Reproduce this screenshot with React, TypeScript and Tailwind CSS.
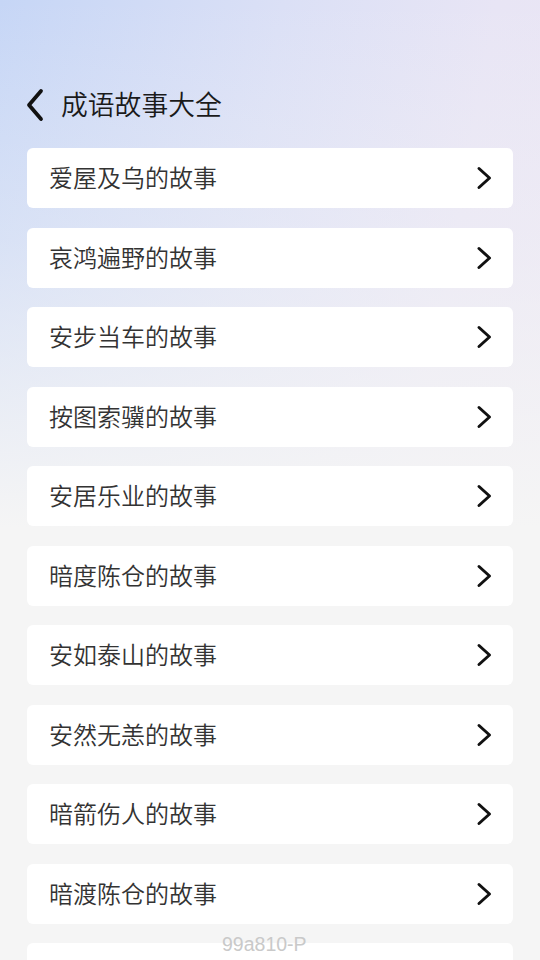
import React from "react";

const items = [
  "爱屋及乌的故事",
  "哀鸿遍野的故事",
  "安步当车的故事",
  "按图索骥的故事",
  "安居乐业的故事",
  "暗度陈仓的故事",
  "安如泰山的故事",
  "安然无恙的故事",
  "暗箭伤人的故事",
  "暗渡陈仓的故事",
  "爱莫能助的故事",
];

function Chevron() {
  return (
    <svg width="18" height="26" viewBox="0 0 18 26" fill="none">
      <path d="M4 3.5 L14.5 13 L4 22.5" stroke="#111" strokeWidth="3" strokeLinecap="round" strokeLinejoin="round" />
    </svg>
  );
}

export default function App() {
  return (
    <div
      className="relative w-[540px] h-[960px] overflow-hidden bg-[#f5f5f5] bg-[linear-gradient(180deg,rgba(245,245,245,0)_0%,rgba(245,245,245,0.35)_25%,#f5f5f5_55%),linear-gradient(100deg,#c6d6f6_0%,#dbe0f6_40%,#e8e5f5_70%,#ebe6f4_100%)]"
      style={{ fontFamily: '"Noto Sans CJK SC", "Noto Sans", sans-serif' }}
    >
      <div className="pt-[88px] px-[27px]">
        <div className="flex items-center h-[34px] -ml-[5px]">
          <svg width="24" height="34" viewBox="0 0 24 34" fill="none">
            <path d="M19 3 L7 17 L19 31" stroke="#111" strokeWidth="3.8" strokeLinecap="round" strokeLinejoin="round" />
          </svg>
          <span className="ml-[15px] -mt-[1px] text-[26.8px] leading-none font-[350] text-[#1a1a1a]">成语故事大全</span>
        </div>
        <div className="mt-[26px] flex flex-col gap-[19.5px]">
          {items.map((t) => (
            <div
              key={t}
              className="h-[60px] bg-white rounded-[6px] flex items-center justify-between pl-[22px] pr-[20px]"
            >
              <span className="-mt-[2px] text-[24px] text-[#333] font-[350] leading-none">{t}</span>
              <Chevron />
            </div>
          ))}
        </div>
      </div>
      <div
        className="absolute left-[222px] top-[935px] text-[19.5px] leading-none text-[#c9c9c9]"
        style={{ fontFamily: '"Liberation Sans", Roboto, sans-serif' }}
      >
        99a810-P
      </div>
    </div>
  );
}
